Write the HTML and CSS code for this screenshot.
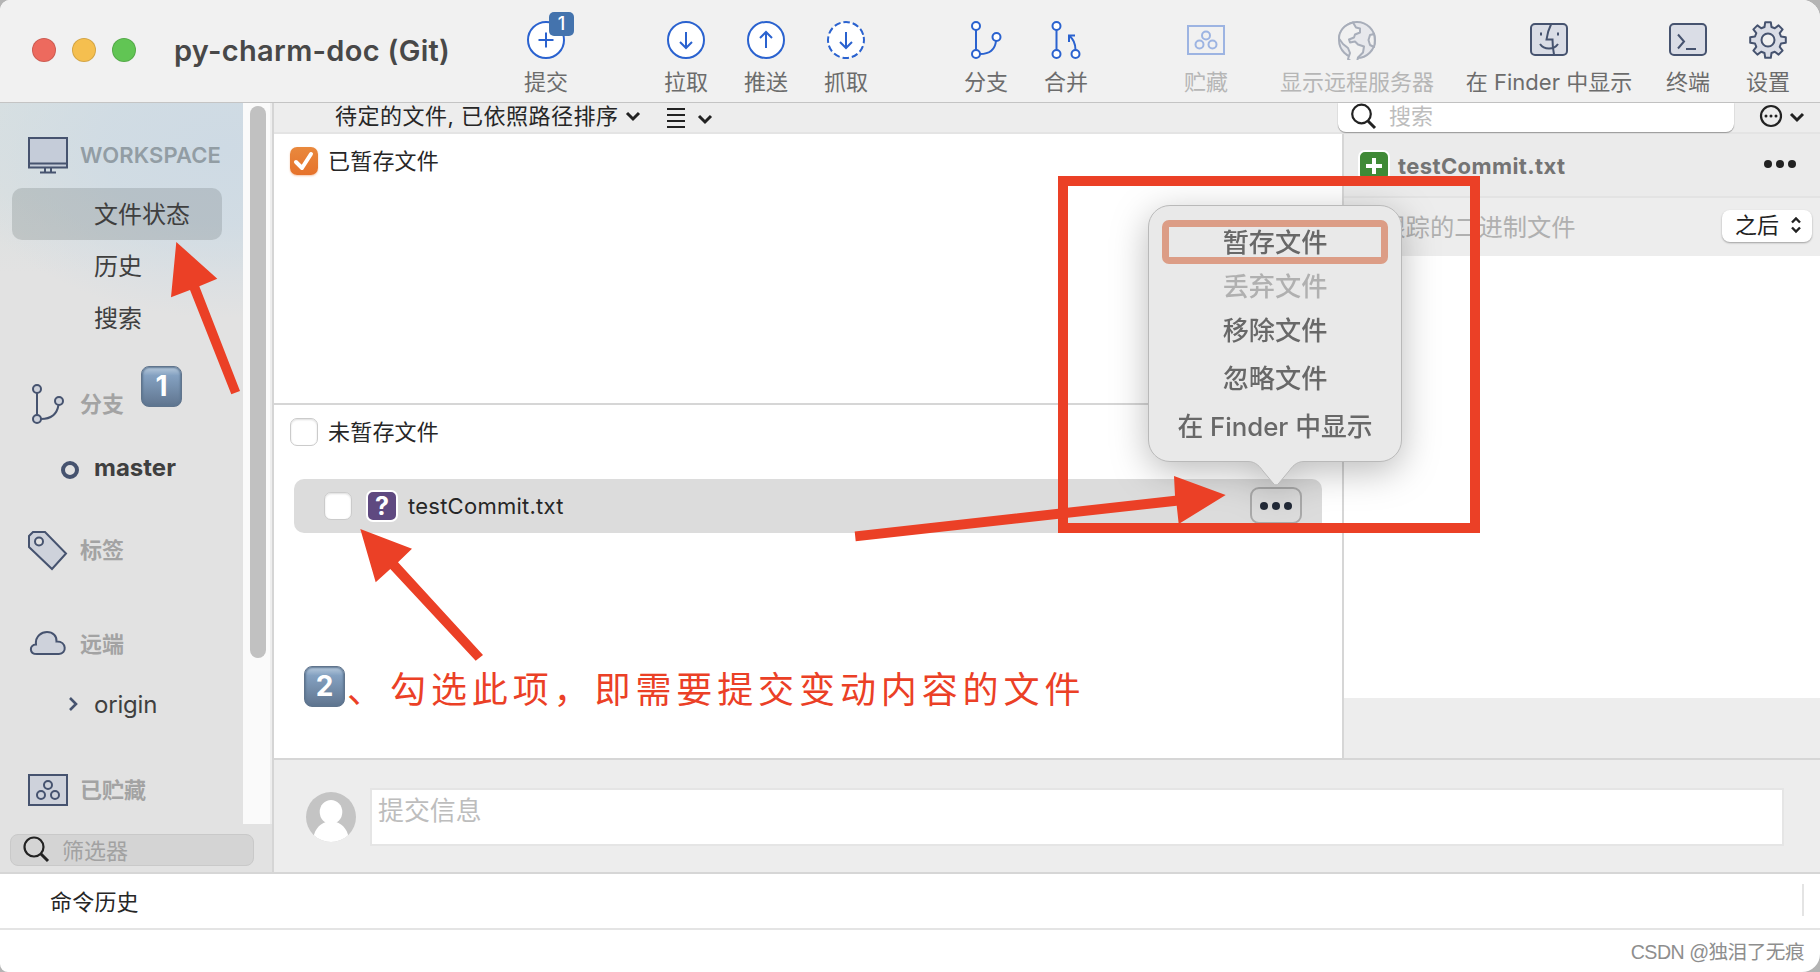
FILE: index.html
```html
<!DOCTYPE html>
<html lang="zh-CN">
<head>
<meta charset="utf-8">
<title>py-charm-doc (Git)</title>
<link rel="stylesheet" href="styles.css">
</head>
<body>
<div class="window">
  <header class="toolbar">
    <div class="lights"><i class="light red"></i><i class="light yellow"></i><i class="light green"></i></div>
    <h1 class="title">py-charm-doc (Git)</h1>
    <nav class="tools">
      <div class="tool blue"><svg width="40" height="40" viewBox="0 0 40 40"><circle cx="20" cy="20" r="18" fill="#fff"/><path d="M20 12.500v15M12.500 20h15"/></svg><span>提交</span><b class="count">1</b></div>
      <div class="tool blue gap-60"><svg width="40" height="40" viewBox="0 0 40 40"><circle cx="20" cy="20" r="18" fill="#fff"/><path d="M20 12v15.500M14 22l6 6 6-6"/></svg><span>拉取</span></div>
      <div class="tool blue"><svg width="40" height="40" viewBox="0 0 40 40"><circle cx="20" cy="20" r="18" fill="#fff"/><path d="M20 28V12.500M14 18l6-6 6 6"/></svg><span>推送</span></div>
      <div class="tool blue"><svg width="40" height="40" viewBox="0 0 40 40"><circle cx="20" cy="20" r="18" fill="#fff" stroke-dasharray="6.400 3.024" transform="rotate(-10 20 20)"/><path d="M20 12v15.500M14 22l6 6 6-6"/></svg><span>抓取</span></div>
      <div class="tool blue gap-60"><svg width="40" height="40" viewBox="0 0 40 40"><g fill="#fff"><circle cx="10" cy="6" r="4"/><circle cx="10" cy="34" r="4"/><circle cx="30.500" cy="17" r="4"/></g><path d="M10 10v20M14 34c9 0 15-4 16-13"/></svg><span>分支</span></div>
      <div class="tool blue"><svg width="40" height="40" viewBox="0 0 40 40"><g fill="#fff"><circle cx="10.500" cy="6" r="4"/><circle cx="10.500" cy="34" r="4"/><circle cx="29.500" cy="34" r="4"/></g><path d="M10.500 10v20M29.500 30c0-6-1-10-6-14M29 15.500h-6V22"/></svg><span>合并</span></div>
      <div class="tool blue faded gap-60"><svg width="40" height="40" viewBox="0 0 40 40"><path d="M2 6h36v28H2z"/><circle cx="20" cy="15.500" r="4"/><circle cx="13.500" cy="24.500" r="4"/><circle cx="26.500" cy="24.500" r="4"/></svg><span>贮藏</span></div>
      <div class="tool navy faded w-222"><svg width="40" height="40" viewBox="0 0 40 40"><circle cx="20" cy="20" r="18" fill="#dadde6"/><path fill="#f1f1f1" d="M16 2.500l3 5 4 1v4l-5 2-1 3-5 2 1 3 5-1 3 3 6 2-1 6-5 5-1 4.500c-4 0-7-1-9-3l2-6-2-5-5-4-4-5.500c0-7 5-14 14-16zM37 14l-4 1-1.500 5 1.500 5 4 2c1-4 1-9 0-13z" stroke-linejoin="round"/></svg><span>显示远程服务器</span></div>
      <div class="tool navy w-162"><svg width="40" height="40" viewBox="0 0 40 40"><rect x="2" y="4" width="36" height="31" rx="4" fill="#dadde6"/><path d="M22 4.500c-3 6-4 11-4.500 15h6c0 6 .5 10 1.500 15M12 12.500v3M29 12.500v3M11 24c4 6 14 6 18 0"/></svg><span>在 Finder 中显示</span></div>
      <div class="tool navy gap-18"><svg width="40" height="40" viewBox="0 0 40 40"><rect x="2" y="4" width="36" height="31" rx="4" fill="#dadde6"/><path d="M10 14.500l6 7-6 7M18 29h10"/></svg><span>终端</span></div>
      <div class="tool navy"><svg width="40" height="40" viewBox="0 0 40 40"><path fill="#dadde6" stroke-linejoin="round" d="M17.200 2.200h5.600L23.500 7l3.300 1.300L30.600 5.400 34.600 9.400 31.700 13.200 33 16.500 37.800 17.200V22.800L33 23.500 31.700 26.800 34.600 30.600 30.600 34.600 26.800 31.700 23.500 33 22.800 37.800H17.200L16.500 33 13.200 31.700 9.400 34.600 5.400 30.600 8.300 26.800 7 23.500 2.200 22.800V17.200L7 16.500 8.300 13.200 5.400 9.400 9.400 5.400 13.200 8.300 16.500 7z"/><circle cx="20" cy="20" r="6.500" fill="#f1f1f1"/></svg><span>设置</span></div>
    </nav>
  </header>

  <div class="body">
    <aside class="sidebar">
      <div class="tree-wrap">
        <div class="tree">
          <div class="group first"><svg class="navy" width="42" height="40" viewBox="0 0 42 40"><path fill="#c5ccd9" d="M2 3h38v29.500H2zM2 28.500h38M18 33v3.500M24 33v3.500M13 37.500h16"/></svg><span>WORKSPACE</span></div>
          <div class="leaf selected">文件状态</div>
          <div class="leaf">历史</div>
          <div class="leaf">搜索</div>
          <div class="group mt-34"><svg class="navy" width="42" height="44" viewBox="0 0 42 44"><g fill="#ced2db"><circle cx="10" cy="7" r="4"/><circle cx="10" cy="37" r="4"/><circle cx="32" cy="19" r="4"/></g><path d="M10 11v22M14 37c10 0 16-5 17.500-14"/></svg><span>分支</span></div>
          <div class="leaf master mt-12"><i class="ring"></i>master</div>
          <div class="group mt-30"><svg class="navy" width="42" height="42" viewBox="0 0 42 42"><path fill="#ced2db" d="M2 7l4-4h12l21 21.500L25 40 2 18z"/><circle cx="12" cy="12.500" r="4" fill="#e2e2e2"/></svg><span>标签</span></div>
          <div class="group mt-42"><svg class="navy" width="42" height="40" viewBox="0 0 42 40"><path fill="#ced2db" d="M10 30C2 30 2 21 9 20.500 8 12 15 8 20 8c6 0 10 4 9.500 9.500C40 17 40 30 32 30z"/></svg><span>远端</span></div>
          <div class="leaf origin mt-9"><svg class="navy arrow" width="12" height="16" viewBox="0 0 12 16"><path stroke-width="2.600" d="M3 2l6 6-6 6"/></svg>origin</div>
          <div class="group mt-33"><svg class="navy" width="42" height="40" viewBox="0 0 42 40"><path fill="#ced2db" d="M2 5h38v30H2z"/><circle cx="21" cy="15" r="4"/><circle cx="14" cy="25" r="4"/><circle cx="28" cy="25" r="4"/></svg><span>已贮藏</span></div>
        </div>
        <div class="track"><i class="thumb"></i></div>
      </div>
      <div class="filter-bar"><div class="filter"><svg class="glyph" width="28" height="28" viewBox="0 0 28 28"><circle cx="12" cy="12" r="9.500"/><path stroke-width="3" d="M19 19l7 7"/></svg><span>筛选器</span></div></div>
    </aside>

    <main class="main">
      <div class="sortbar">
        <span class="sort">待定的文件, 已依照路径排序</span>
        <svg class="glyph sort-chev" width="16" height="12" viewBox="0 0 16 12"><path d="M2 3l6 6 6-6"/></svg>
        <svg class="glyph lines" width="18" height="22" viewBox="0 0 18 22"><path stroke-width="2" d="M0 2h18M0 8h18M0 14h18M0 20h18"/></svg>
        <svg class="glyph list-chev" width="16" height="12" viewBox="0 0 16 12"><path d="M2 3l6 6 6-6"/></svg>
        <div class="search"><svg class="glyph" width="28" height="28" viewBox="0 0 28 28"><circle cx="11.500" cy="11" r="9.300"/><path stroke-width="3" d="M18 18l7 7"/></svg><span>搜索</span></div>
        <svg class="glyph more" width="24" height="24" viewBox="0 0 24 24"><circle cx="12" cy="12" r="10" stroke-width="2"/><g class="more-dots"><circle cx="7" cy="12" r="1.500"/><circle cx="12" cy="12" r="1.500"/><circle cx="17" cy="12" r="1.500"/></g></svg>
        <svg class="glyph more-chev" width="16" height="12" viewBox="0 0 16 12"><path d="M2 3l6 6 6-6"/></svg>
      </div>
      <div class="panes">
        <section class="files">
          <div class="staged"><div class="check-row"><i class="check on"><svg width="28" height="28" viewBox="0 0 28 28"><path d="M6 15l6 6L21 7"/></svg></i><span>已暂存文件</span></div></div>
          <div class="unstaged">
            <div class="check-row"><i class="check"></i><span>未暂存文件</span></div>
            <div class="file"><i class="check"></i><b class="badge purple">?</b><span>testCommit.txt</span><div class="dots-btn"><i class="dot"></i><i class="dot"></i><i class="dot"></i></div></div>
          </div>
        </section>
        <section class="diff">
          <div class="diff-head"><b class="badge plus"><svg width="28" height="28" viewBox="0 0 28 28"><path d="M14 6v16M6 14h16" stroke="#fff" stroke-width="4"/></svg></b><span>testCommit.txt</span><div class="dots"><i class="dot"></i><i class="dot"></i><i class="dot"></i></div></div>
          <div class="diff-sub"><span>未跟踪的二进制文件</span><div class="select">之后<svg class="glyph" width="14" height="18" viewBox="0 0 14 18"><path stroke-width="2.400" d="M3 6.500l4-4 4 4M3 11.500l4 4 4-4"/></svg></div></div>
          <div class="diff-body"></div>
        </section>
      </div>
      <div class="commit">
        <svg class="avatar" width="50" height="50" viewBox="0 0 50 50"><defs><clipPath id="face"><circle cx="25" cy="25" r="25"/></clipPath></defs><g clip-path="url(#face)"><path fill="#c4c4c4" d="M0 0h50v50H0z"/><ellipse cx="25" cy="20" rx="11.300" ry="12" fill="#fff"/><path fill="#fff" d="M7 50c0-11 6-18 13-20h10c7 2 13 9 13 20z"/></g></svg>
        <div class="message">提交信息</div>
      </div>
    </main>
  </div>
  <div class="history"><span>命令历史</span><i></i></div>
  <footer class="footer">CSDN @独泪了无痕</footer>
</div>

<div class="popover">
  <svg class="bubble" width="254" height="282" viewBox="0 0 254 282"><path d="M22 .5H232A21.500 21.500 0 0 1 253.500 22V235A21.500 21.500 0 0 1 232 256.500H156C148 256.500 144 262 141 266L131 278Q128 282 125 278L115 266C112 262 108 256.500 100 256.500H22A21.500 21.500 0 0 1 .5 235V22A21.500 21.500 0 0 1 22 .5z" fill="#e9e9e9" stroke="#b9b9b9"/></svg>
  <div class="menu">
    <div class="item focus">暂存文件</div>
    <div class="item off">丢弃文件</div>
    <div class="item">移除文件</div>
    <div class="item tall">忽略文件</div>
    <div class="item tall">在 Finder 中显示</div>
  </div>
</div>
<div class="frame"></div>
<svg class="arrows" width="1820" height="972" viewBox="0 0 1820 972"><path d="M176.300 242L217.300 278.700 199.300 286.300 240 391 231.300 394.300 190 290 171 297.300zM360.300 529L412 548.700 398 562.300 483 655 475.700 660.700 390.300 569 375.700 582.300zM1225.700 495L1174 476 1175 495.700 854.700 531.500 855.700 541.300 1176.700 505.700 1178.700 524z"/></svg>
<b class="keycap one">1</b>
<b class="keycap two">2</b>
<div class="note"><span>、</span>勾选此项，即需要提交变动内容的文件</div>
</body>
</html>
```
FILE: styles.css
```css
* { box-sizing: border-box; }
body {
  margin: 0;
  width: 1820px;
  height: 972px;
  overflow: hidden;
  position: relative;
  background: #b4b4b4;
  font-family: Inter, "Noto Sans CJK SC", sans-serif;
  font-size: 22px;
  color: #262626;
  white-space: nowrap;
}
svg { display: block; flex: none; fill: none; }
i, b, em { font-style: normal; flex: none; }
.window {
  height: 972px;
  display: flex;
  flex-direction: column;
  border-radius: 10px 18px 18px 8px;
  overflow: hidden;
  background: #fff;
}

/* toolbar */
.toolbar {
  height: 103px;
  flex: none;
  display: flex;
  background: #f1f1f1;
  border-bottom: 1px solid #c4c4c4;
}
.lights { display: flex; gap: 16px; padding: 38px 0 0 32px; }
.light { width: 24px; height: 24px; border-radius: 50%; border: 1px solid #0002; }
.red { background: #ed6a5e; }
.yellow { background: #f5bf4f; }
.green { background: #61c554; }
.title {
  margin: 0 0 0 38px;
  width: 332px;
  font-size: 29px;
  line-height: 102px;
  font-weight: 600;
  letter-spacing: .3px;
  color: #484848;
}
.tools { display: flex; }
.tool {
  position: relative;
  width: 80px;
  flex: none;
  display: flex;
  flex-direction: column;
  align-items: center;
  padding-top: 20px;
  color: #6c6c6c;
}
.tool span { margin-top: 7px; line-height: 30px; }
.gap-60 { margin-left: 60px; }
.gap-18 { margin-left: 18px; }
.w-222 { width: 222px; }
.w-162 { width: 162px; }
.blue svg { stroke: #2a62cf; stroke-width: 2; }
.navy svg, svg.navy { stroke: #46536f; stroke-width: 2; }
.faded svg { opacity: .42; }
.faded span { color: #b6b6b6; }
.count {
  position: absolute;
  left: 43px;
  top: 12px;
  width: 25px;
  height: 24px;
  border-radius: 5px;
  background: #4473ad;
  color: #fff;
  font-size: 18px;
  font-weight: 500;
  line-height: 24px;
  text-align: center;
}

/* sidebar */
.body { display: flex; height: 769px; flex: none; }
.sidebar {
  width: 274px;
  flex: none;
  border-right: 2px solid #d5d5d5;
  background: #e2e2e2;
}
.tree-wrap { display: flex; height: 721px; }
.tree {
  width: 243px;
  padding: 19px 0 0 12px;
  background:
    radial-gradient(ellipse 270px 170px at 225px 45px, #cedae4 0%, #cfdbe4d9 45%, #d9dfe100 100%),
    linear-gradient(#d8e0e1, #dbe0e0 90px, #e2e2e2 170px);
}
.group {
  height: 52px;
  display: flex;
  align-items: center;
  gap: 11px;
  padding-left: 15px;
  color: #a3a3a3;
  font-weight: 700;
}
.group span { margin-bottom: 5px; }
.group.first { height: 66px; color: #929da4; font-weight: 600; letter-spacing: .1px; }
.group.first span { margin-bottom: 0; }
.leaf {
  position: relative;
  width: 210px;
  height: 52px;
  padding-left: 82px;
  font-size: 24px;
  line-height: 54px;
  color: #3f3f3f;
}
.selected { background: #46505030; border-radius: 10px; }
.master { font-weight: 700; line-height: 51px; }
.origin { line-height: 52px; letter-spacing: -.2px; }
.ring {
  position: absolute;
  left: 49px;
  top: 19px;
  width: 18px;
  height: 18px;
  border: 4.500px solid #46536f;
  border-radius: 50%;
}
.arrow { position: absolute; left: 55px; top: 17px; }
.mt-34 { margin-top: 34px; }
.mt-12 { margin-top: 12px; }
.mt-30 { margin-top: 30px; }
.mt-42 { margin-top: 42px; }
.mt-9 { margin-top: 9px; }
.mt-33 { margin-top: 33px; }
.track { flex: 1; padding: 3px 4px 0 7px; background: #fafafa; border-right: 2px solid #eee; }
.thumb { display: block; width: 16px; height: 552px; border-radius: 8px; background: #c1c1c1; }
.filter-bar { padding: 10px 0 0 10px; }
.filter {
  width: 244px;
  height: 32px;
  border: 1px solid #c9c9c9;
  border-radius: 8px;
  background: #d4d4d4;
  display: flex;
  align-items: center;
  gap: 12px;
  padding: 0 0 2px 11px;
  color: #a2a2a2;
}
.glyph { stroke: #222; stroke-width: 3; }
.glyph circle { stroke-width: 2.200; }
.glyph .more-dots circle { fill: #222; stroke: none; }

/* main column */
.main { flex: 1; display: flex; flex-direction: column; }
.sortbar {
  height: 31px;
  flex: none;
  display: flex;
  background: #ededed;
  border-bottom: 2px solid #e4e4e4;
  line-height: 26px;
  padding-left: 61px;
}
.sort { width: 290px; letter-spacing: .5px; }
.sort-chev { margin-top: 7px; }
.lines { margin: 4px 0 0 26px; }
.list-chev { margin: 10px 0 0 12px; }
.search {
  margin-left: 625px;
  width: 396px;
  height: 29px;
  display: flex;
  gap: 11px;
  padding-left: 12px;
  background: #fff;
  border-radius: 0 0 8px 8px;
  box-shadow: 0 1px 1px #999, 0 0 1px #aaa;
  color: #bdbdbd;
}
.more { margin: 1px 0 0 25px; }
.more-chev { margin: 8px 0 0 6px; }
.panes { height: 624px; flex: none; display: flex; background: #fff; }
.files { width: 1070px; border-right: 2px solid #d6d6d6; }
.staged { height: 271px; padding: 13px 0 0 16px; border-bottom: 2px solid #d6d6d6; }
.unstaged { padding: 13px 0 0 16px; }
.check-row { height: 28px; display: flex; align-items: center; gap: 10px; line-height: 28px; letter-spacing: .2px; }
.check {
  width: 28px;
  height: 28px;
  border: 1px solid #cbcbcb;
  border-radius: 7px;
  background: #fff;
  box-shadow: inset 0 1px 2px #0002;
}
.check.on { border: 0; background: linear-gradient(#e9893d, #e6722b); box-shadow: 0 1px 2px #e6722b66; }
.check.on svg { stroke: #fff; stroke-width: 4; stroke-linecap: round; stroke-linejoin: round; }
.file {
  width: 1028px;
  height: 54px;
  margin: 33px 0 0 4px;
  padding: 0 0 1px 30px;
  border-radius: 10px;
  background: #dcdcdc;
  display: flex;
  align-items: center;
  letter-spacing: .25px;
}
.badge { width: 32px; height: 32px; border: 2px solid #fff; border-radius: 7px; color: #fff; text-align: center; }
.purple { margin: 0 10px 0 14px; background: #5f4980; font-size: 25px; line-height: 28px; }
.dots-btn {
  margin: 0 20px 0 auto;
  width: 52px;
  height: 37px;
  border: 2px solid #aaa;
  border-radius: 9px;
  display: flex;
  gap: 4px;
  align-items: center;
  justify-content: center;
}
.dot { width: 8px; height: 8px; border-radius: 50%; background: #222a38; }
.diff { width: 476px; }
.diff-head {
  height: 64px;
  background: #ebebeb;
  border-bottom: 2px solid #e3e3e3;
  display: flex;
  align-items: center;
  padding: 2px 24px 0 14px;
  font-weight: 700;
  letter-spacing: .4px;
  color: #747474;
}
.plus { margin-right: 8px; background: #408a37; }
.dots { margin: 0 0 4px auto; display: flex; gap: 4px; }
.dots .dot { background: #222; }
.diff-sub {
  height: 58px;
  background: #ededed;
  display: flex;
  justify-content: space-between;
  padding: 0 8px 0 13px;
  font-size: 24.300px;
  line-height: 58px;
  color: #b0b0b0;
}
.select {
  margin-top: 12px;
  width: 90px;
  height: 32px;
  border-radius: 8px;
  background: #fff;
  box-shadow: 0 1px 2px #0005;
  display: flex;
  align-items: center;
  justify-content: space-between;
  padding: 0 9px 2px 13px;
  font-size: 22px;
  line-height: 28px;
  color: #222;
}
.diff-body { height: 502px; background: linear-gradient(#fff 442px, #ededed 442px); }
.commit {
  flex: 1;
  display: flex;
  padding: 28px 36px 0 32px;
  background: #ededed;
  border-top: 2px solid #d6d6d6;
}
.avatar { margin: 4px 14px 0 0; }
.message {
  flex: 1;
  height: 58px;
  border: 2px solid #e5e5e5;
  background: #fff;
  padding-left: 6px;
  font-size: 25.900px;
  line-height: 41px;
  color: #bdbdbd;
}
.history {
  height: 58px;
  flex: none;
  border-top: 2px solid #d6d6d6;
  border-bottom: 2px solid #e4e4e4;
  display: flex;
  justify-content: space-between;
  align-items: center;
  padding: 0 16px 0 50px;
}
.history span { margin-bottom: 3px; letter-spacing: .2px; }
.history i { width: 2px; height: 32px; background: #e4e4e4; margin-bottom: 2px; }
.footer {
  padding: 0 16px;
  text-align: right;
  font-size: 19.600px;
  line-height: 44px;
  letter-spacing: -.5px;
  color: #8e8e8e;
  font-family: "Liberation Sans", "Noto Sans CJK SC", sans-serif;
}

/* popover menu over the file row */
.popover { position: absolute; left: 1148px; top: 205px; width: 254px; height: 282px; filter: drop-shadow(0 9px 18px #0004); }
.bubble { position: absolute; left: 0; top: 0; }
.menu { position: relative; padding: 15px 14px; }
.item { height: 44px; line-height: 45px; font-size: 26.200px; font-weight: 500; text-align: center; color: #686868; }
.focus { border: 7px solid #dc9d86; border-radius: 7px; line-height: 31px; }
.off { color: #b0b0b0; }
.tall { height: 48px; line-height: 53px; }
.tall:last-child { font-size: 25.800px; }

/* annotations */
.frame { position: absolute; left: 1058px; top: 176px; width: 422px; height: 357px; border: 10px solid #eb4026; }
.arrows { position: absolute; left: 0; top: 0; fill: #eb4026; }
.keycap {
  position: absolute;
  width: 41px;
  height: 41px;
  border: 1px solid #60748c;
  border-radius: 8px;
  background: linear-gradient(#b9cbdd, #84a1c1 22%, #60758f);
  box-shadow: inset 0 0 2px 1px #5d7692;
  color: #fff;
  font-size: 28px;
  line-height: 39px;
  text-align: center;
}
.one { left: 141px; top: 366px; }
.two { left: 304px; top: 666px; }
.note {
  position: absolute;
  left: 347px;
  top: 660px;
  font-family: "Kaiti SC", KaiTi, STKaiti, "Noto Sans CJK SC", sans-serif;
  font-size: 36px;
  line-height: 54px;
  letter-spacing: 4.900px;
  color: #eb4026;
}
.note span { display: inline-block; width: 43px; }
```
